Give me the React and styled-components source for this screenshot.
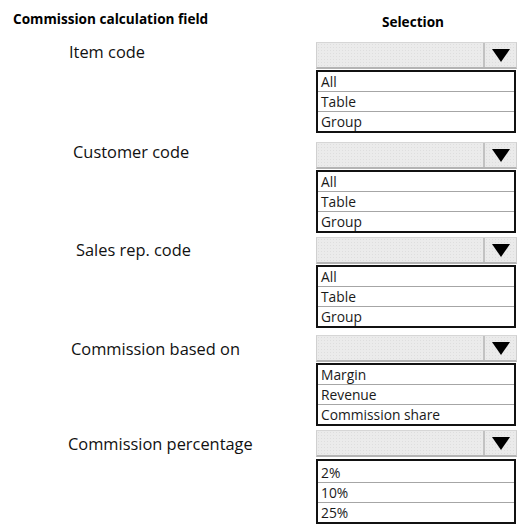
import React from "react";
import styled, { createGlobalStyle } from "styled-components";

const Global = createGlobalStyle`
  html, body { margin: 0; padding: 0; background: #fff; }
  body { font-family: "Open Sans", "Noto Sans", sans-serif; color: #111; }
`;

const Page = styled.div`
  width: 518px;
  height: 524px;
  overflow: hidden;
  background: #fff;
`;

const Header = styled.div`
  display: grid;
  grid-template-columns: 316px 201px;
  height: 42px;
`;

const Title = styled.div`
  font-weight: 700;
  font-size: 13.6px;
  line-height: 16px;
  padding: 11px 0 0 13px;
  color: #000;
`;

const ColTitle = styled.div`
  font-weight: 700;
  font-size: 13.6px;
  line-height: 16px;
  padding: 14px 7px 0 0;
  text-align: center;
  color: #000;
`;

const Row = styled.div`
  display: grid;
  grid-template-columns: 316px 201px;
  margin-top: ${(p) => p.$top}px;
`;

const Label = styled.div`
  font-size: 16.4px;
  line-height: 20px;
  padding-left: ${(p) => p.$indent}px;
  padding-top: ${(p) => p.$drop}px;
  color: #111;
`;

const Field = styled.div`
  display: flex;
  flex-direction: column;
  gap: ${(p) => p.$gap}px;
`;

const Combo = styled.div`
  display: flex;
  height: 27px;
  box-sizing: border-box;
  border-top: 1px solid #d6d6d6;
  border-left: 1px solid #d0d0d0;
  border-bottom: 2px solid #b4b4b4;
  border-right: 1px solid #cfcfcf;
  background-color: #ebebeb;
  background-image: radial-gradient(#dedede 0.6px, transparent 0.8px);
  background-size: 3px 3px;
`;

const ComboValue = styled.div`
  flex: 1;
`;

const ArrowBox = styled.div`
  width: 31px;
  border-left: 2px solid #c2c2c2;
  display: flex;
  align-items: center;
  justify-content: center;
`;

const List = styled.div`
  border: 2px solid #111;
  margin-right: 1px;
  background: #fff;
  display: flex;
  flex-direction: column;
`;

const Option = styled.div`
  height: ${(p) => p.$h || 19}px;
  box-sizing: border-box;
  font-size: 13.8px;
  line-height: 17px;
  padding: ${(p) => (p.$h ? p.$h - 19 : 0)}px 0 1px 3px;
  display: flex;
  align-items: center;
  color: #1a1a1a;
  & + & {
    border-top: 1px solid #a6a6a6;
    height: 20px;
    padding-top: 0;
  }
`;

const Arrow = () => (
  <svg width="18" height="13" viewBox="0 0 18 13">
    <polygon points="0,0 18,0 9,13" fill="#000" />
  </svg>
);

const rows = [
  { label: "Item code", indent: 69, drop: 0, top: 0, gap: 1, options: ["All", "Table", "Group"] },
  { label: "Customer code", indent: 73, drop: 0, top: 9, gap: 1, options: ["All", "Table", "Group"] },
  { label: "Sales rep. code", indent: 76, drop: 3, top: 4, gap: 1, options: ["All", "Table", "Group"] },
  { label: "Commission based on", indent: 71, drop: 4, top: 7, gap: 1, options: ["Margin", "Revenue", "Commission share"] },
  { label: "Commission percentage", indent: 68, drop: 4, top: 4, gap: 2, first: 21, options: ["2%", "10%", "25%"] },
];

export default function App() {
  return (
    <Page>
      <Global />
      <Header>
        <Title>Commission calculation field</Title>
        <ColTitle>Selection</ColTitle>
      </Header>
      {rows.map((r) => (
        <Row key={r.label} $top={r.top}>
          <Label $indent={r.indent} $drop={r.drop}>{r.label}</Label>
          <Field $gap={r.gap}>
            <Combo>
              <ComboValue />
              <ArrowBox>
                <Arrow />
              </ArrowBox>
            </Combo>
            <List>
              {r.options.map((o, i) => (
                <Option key={o} $h={i === 0 ? r.first : undefined}>
                  {o}
                </Option>
              ))}
            </List>
          </Field>
        </Row>
      ))}
    </Page>
  );
}
